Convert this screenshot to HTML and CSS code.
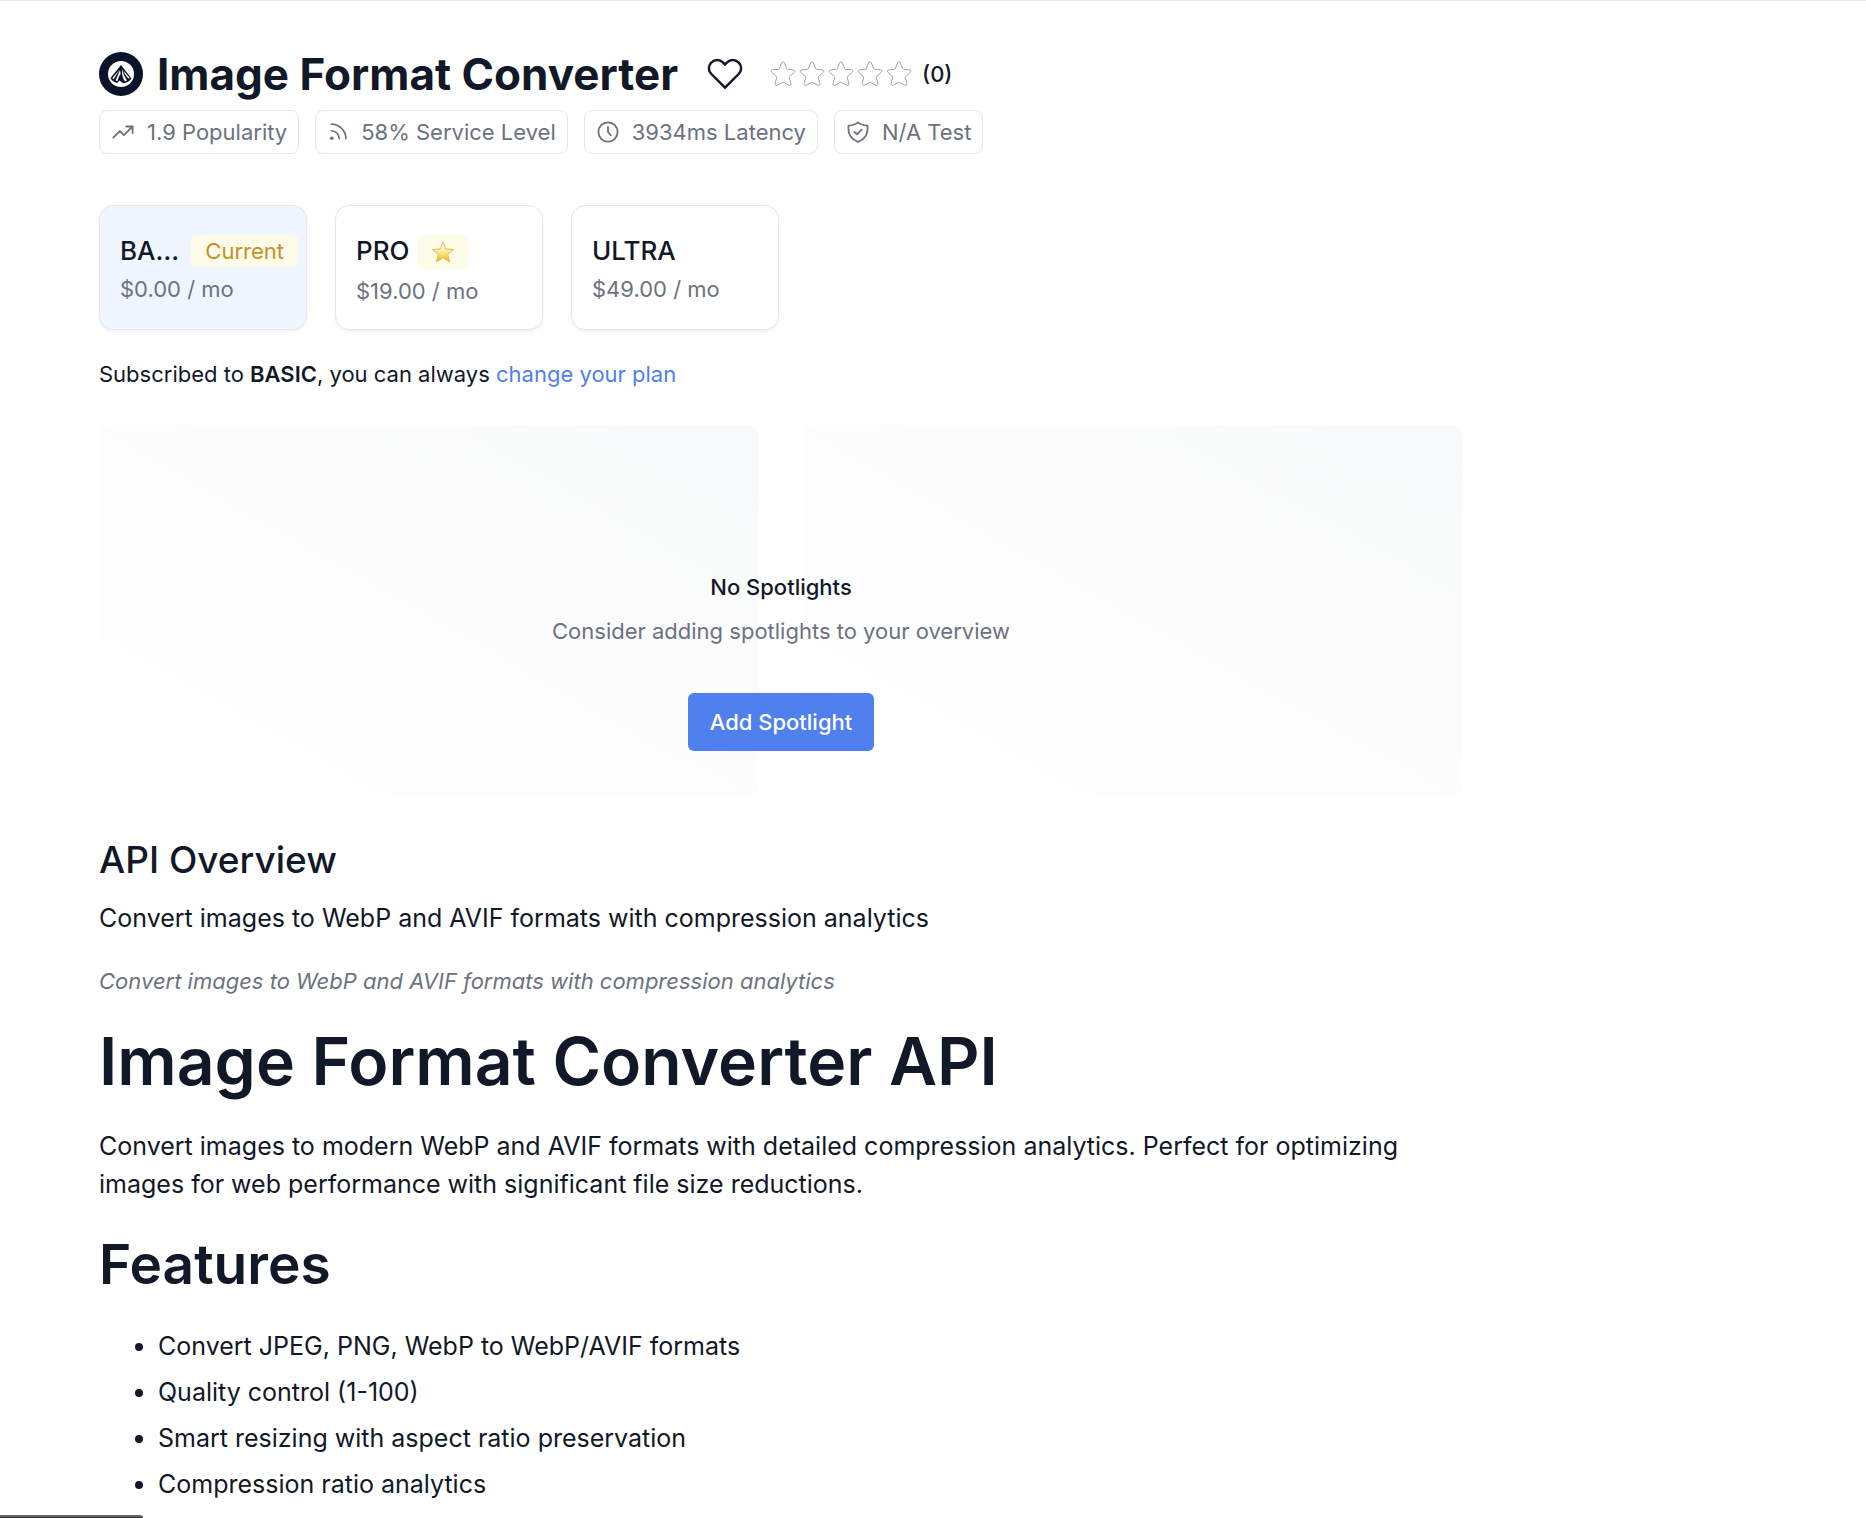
FILE: index.html
```html
<!DOCTYPE html>
<html lang="en">
<head>
    <meta charset="UTF-8">
    <meta name="viewport" content="width=device-width, initial-scale=1.0">
    <title>Image Format Converter</title>
    <link rel="stylesheet" href="styles.css">
</head>
<body>
    <svg class="sprite" aria-hidden="true">
        <symbol id="star" viewBox="0 0 26 26">
            <path d="M11.8 1.6a1.3 1.3 0 0 1 2.4 0l2.5 6.1a1 1 0 0 0 .8.6l6.2.6a1.3 1.3 0 0 1 .7 2.2l-4.8 4.4a1 1 0 0 0-.3.9l1.6 6.5a1.3 1.3 0 0 1-1.9 1.4l-5.5-2.9a1 1 0 0 0-1 0L7 24.3a1.3 1.3 0 0 1-1.9-1.4l1.6-6.5a1 1 0 0 0-.3-.9l-4.8-4.4a1.3 1.3 0 0 1 .7-2.2l6.2-.6a1 1 0 0 0 .8-.6z" />
        </symbol>
    </svg>

    <main class="container">
        <header class="api-header">
            <svg class="logo" viewBox="0 0 44 44" aria-hidden="true">
                <circle cx="22" cy="22" r="22" fill="#0b132b" />
                <circle cx="22" cy="22" r="13" fill="#fff" />
                <path d="M22 13 L11.500 26 Q12.500 29 18 31 L20.500 28.500 L24 31.200 Q30 30.500 32.500 26.500 Z" fill="#0b132b" />
                <path d="M20.500 17.500 L13.500 26 L14.500 27.500 Z M21 18 L16.500 28.500 L18.500 29 Q19 25 21.600 22 Z M23 17 Q22.500 25 26 29.500 L28 28.500 Q24.500 24 23 17 Z M24.500 18.500 Q26 24 30 26.800 L30.800 26 Z" fill="#fff" />
            </svg>
            <h1 class="api-name">Image Format Converter</h1>
            <button class="favorite" type="button" aria-label="Add to favorites">
                <svg viewBox="0 0 38 34" fill="none" stroke="currentColor" stroke-width="2.600">
                    <path d="M19 31.500 L4.500 17 C1 13.500 1 8 4.500 4.800 C8 1.300 13.500 1.300 17 4.800 L19 6.800 L21 4.800 C24.500 1.300 30 1.300 33.500 4.800 C37 8 37 13.500 33.500 17 Z" />
                </svg>
            </button>
            <div class="rating">
                <svg class="star"><use href="#star" /></svg>
                <svg class="star"><use href="#star" /></svg>
                <svg class="star"><use href="#star" /></svg>
                <svg class="star"><use href="#star" /></svg>
                <svg class="star"><use href="#star" /></svg>
                <span class="rating-count">(0)</span>
            </div>
        </header>

        <div class="stats">
            <div class="stat">
                <svg viewBox="0 0 24 24"><path d="M1.500 18 L8.500 11 L13 15.500 L22 6.500 M15.500 6 H22.500 V13" /></svg>
                1.9 Popularity
            </div>
            <div class="stat">
                <svg class="icon-small" viewBox="0 0 24 24"><path d="M4 10.500 A9.500 9.500 0 0 1 13.500 20 M4 2.500 A17.500 17.500 0 0 1 21.500 20" /><circle class="dot" cx="4.500" cy="19.500" r="2.200" /></svg>
                58% Service Level
            </div>
            <div class="stat">
                <svg viewBox="0 0 24 24"><circle cx="12" cy="12" r="10.500" /><path d="M12 6.500 V12 L15 15.500" /></svg>
                3934ms Latency
            </div>
            <div class="stat">
                <svg viewBox="0 0 24 24"><path d="M12 1.500 Q15.500 4.500 22.300 5 Q24 18 12 22.800 Q0 18 1.700 5 Q8.500 4.500 12 1.500 Z M8 12 L11 14.500 L16 9.500" /></svg>
                N/A Test
            </div>
        </div>

        <div class="plans">
            <button class="plan plan-active" type="button">
                <span class="plan-title"><span class="plan-name">BASIC</span><span class="badge badge-current">Current</span></span>
                <span class="plan-price">$0.00 / mo</span>
            </button>
            <button class="plan" type="button">
                <span class="plan-title"><span class="plan-name">PRO</span><span class="badge badge-star">
                    <svg viewBox="0 0 24 24" aria-label="Recommended">
                        <defs>
                            <linearGradient id="gold" x1="0" y1="0" x2="0" y2="1">
                                <stop offset="0.200" stop-color="#fffbe0" />
                                <stop offset="0.600" stop-color="#fde277" />
                                <stop offset="1" stop-color="#f3ae20" />
                            </linearGradient>
                        </defs>
                        <path d="M12 2 L14.800 9 L22.500 9.500 L16.700 14.300 L18.500 21.800 L12 17.700 L5.500 21.800 L7.300 14.300 L1.500 9.500 L9.200 9 Z" fill="url(#gold)" stroke="#e8b659" stroke-linejoin="round" />
                    </svg>
                </span></span>
                <span class="plan-price">$19.00 / mo</span>
            </button>
            <button class="plan" type="button">
                <span class="plan-title"><span class="plan-name">ULTRA</span></span>
                <span class="plan-price">$49.00 / mo</span>
            </button>
        </div>

        <p class="subscription">Subscribed to <strong>BASIC</strong>, you can always <a href="#">change your plan</a></p>

        <section class="spotlights">
            <div class="spotlight-card"></div>
            <div class="spotlight-card"></div>
            <div class="spotlight-empty">
                <h2>No Spotlights</h2>
                <p>Consider adding spotlights to your overview</p>
                <button class="add-button" type="button">Add Spotlight</button>
            </div>
        </section>

        <section class="overview">
            <h2 class="overview-title">API Overview</h2>
            <p>Convert images to WebP and AVIF formats with compression analytics</p>
            <p class="tagline">Convert images to WebP and AVIF formats with compression analytics</p>
            <h1>Image Format Converter API</h1>
            <p class="intro">Convert images to modern WebP and AVIF formats with detailed compression analytics. Perfect for optimizing images for web performance with significant file size reductions.</p>
            <h2>Features</h2>
            <ul>
                <li>Convert JPEG, PNG, WebP to WebP/AVIF formats</li>
                <li>Quality control (1-100)</li>
                <li>Smart resizing with aspect ratio preservation</li>
                <li>Compression ratio analytics</li>
            </ul>
        </section>
    </main>

    <div class="status-bar"></div>
</body>
</html>
```
FILE: styles.css
```css
:root {
    --text: #111827;
    --muted: #6b7280;
    --border: #e5e7eb;
    --blue: #4f80ee;
}

* {
    box-sizing: border-box;
}

body {
    margin: 0;
    font-family: Inter, sans-serif;
    font-size: 25px;
    line-height: 38px;
    color: var(--text);
    background: #fff;
    border-top: 1px solid var(--border);
}

h1, h2, p, ul {
    margin: 0;
}

button {
    font-family: inherit;
    color: inherit;
    cursor: pointer;
}

.sprite {
    display: none;
}

.container {
    max-width: 1562px;
    padding: 51px 99px 0;
}

/* Header */
.api-header {
    display: flex;
    align-items: center;
}

.logo {
    width: 44px;
    height: 44px;
    margin-right: 14px;
}

.api-name {
    font-size: 44px;
    line-height: 44px;
    font-weight: 700;
}

.favorite {
    display: flex;
    margin-left: 28px;
    padding: 0;
    border: none;
    background: none;
}

.favorite svg {
    width: 38px;
    height: 32px;
}

.rating {
    display: flex;
    align-items: center;
    gap: 3px;
    margin-left: 26px;
}

.star {
    width: 26px;
    height: 26px;
    fill: none;
    stroke: #9ca3af;
}

.rating-count {
    margin-left: 7px;
    font-size: 22px;
    font-weight: 500;
}

/* Stats */
.stats {
    display: flex;
    gap: 16px;
    margin-top: 14px;
}

.stat {
    display: flex;
    align-items: center;
    gap: 13px;
    height: 44px;
    padding: 0 11px 0 12px;
    border: 1px solid var(--border);
    border-radius: 8px;
    font-size: 22px;
    color: var(--muted);
}

.stat svg {
    width: 22px;
    height: 22px;
    fill: none;
    stroke: currentColor;
    stroke-width: 2;
    stroke-linecap: round;
    stroke-linejoin: round;
}

.stat .icon-small {
    width: 20px;
    height: 20px;
}

.stat .dot {
    fill: currentColor;
    stroke: none;
}

/* Plans */
.plans {
    display: flex;
    gap: 28px;
    margin-top: 51px;
}

.plan {
    display: flex;
    flex-direction: column;
    width: 208px;
    height: 125px;
    padding: 29px 8px 0 20px;
    border: 1px solid var(--border);
    border-radius: 14px;
    background: #fff;
    box-shadow: 0 2px 3px rgba(0, 0, 0, 0.05);
    text-align: left;
}

.plan-active {
    background: #eff6ff;
}

.plan-title {
    display: flex;
    align-items: flex-start;
    width: 100%;
    gap: 8px;
}

.plan-name {
    overflow: hidden;
    text-overflow: ellipsis;
    font-size: 26px;
    line-height: 32px;
    font-weight: 500;
}

.badge {
    flex: none;
    padding: 0 14px;
    border-radius: 6px;
    background: #fefce8;
    font-size: 22px;
    line-height: 32px;
    color: #c4902c;
}

.badge-star {
    display: flex;
    align-items: center;
    height: 34px;
}

.badge-star svg {
    width: 24px;
    height: 24px;
}

.plan-price {
    margin-top: 6px;
    font-size: 22px;
    line-height: 32px;
    color: var(--muted);
}

.subscription {
    margin-top: 28px;
    font-size: 22px;
    line-height: 32px;
}

.subscription strong {
    font-weight: 600;
}

.subscription a {
    color: var(--blue);
    text-decoration: none;
}

/* Spotlights */
.spotlights {
    position: relative;
    display: grid;
    grid-template-columns: 1fr 1fr;
    gap: 44px;
    margin-top: 35px;
}

.spotlight-card {
    height: 372px;
    border-radius: 12px;
    background: linear-gradient(to top right, #fff, #f9fafb);
}

.spotlight-empty {
    position: absolute;
    inset: 0;
    display: flex;
    flex-direction: column;
    align-items: center;
    padding-top: 146px;
    font-size: 22px;
    line-height: 32px;
}

.spotlight-empty h2 {
    font-size: 22px;
    font-weight: 500;
}

.spotlight-empty p {
    margin-top: 12px;
    color: var(--muted);
}

.add-button {
    height: 58px;
    margin-top: 46px;
    padding: 0 22px;
    border: none;
    border-radius: 6px;
    background: var(--blue);
    color: #fff;
    font-size: 22px;
    font-weight: 500;
}

/* Overview */
.overview {
    margin-top: 41px;
}

.overview h1 {
    margin-top: 28px;
    font-size: 66px;
    line-height: 72px;
    font-weight: 600;
}

.overview h2 {
    margin-top: 31px;
    font-size: 55px;
    line-height: 60px;
    font-weight: 600;
}

.overview .overview-title {
    margin: 0 0 17px;
    font-size: 37px;
    line-height: 44px;
    font-weight: 500;
}

.overview .tagline {
    margin-top: 28px;
    font-size: 22px;
    line-height: 32px;
    font-style: italic;
    color: var(--muted);
}

.intro {
    margin-top: 30px;
}

.overview ul {
    display: grid;
    gap: 8px;
    margin-top: 33px;
    padding-left: 59px;
}

/* Link preview strip at the bottom of the window */
.status-bar {
    position: fixed;
    left: 0;
    bottom: 0;
    width: 143px;
    height: 3px;
    border-top: 2px solid #666;
    border-top-right-radius: 4px;
    background: #332f30;
}
```
